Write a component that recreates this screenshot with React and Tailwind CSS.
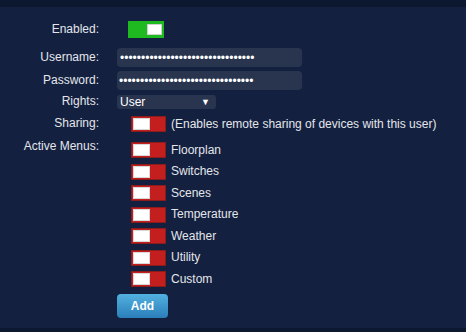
import React from 'react';

const menus = ['Floorplan', 'Switches', 'Scenes', 'Temperature', 'Weather', 'Utility', 'Custom'];

const RedToggle = () => (
  <div className="w-[35px] h-[16px] bg-[#c41f1f] border border-[#8a1c1c] flex items-center pl-[1px] shrink-0">
    <div className="w-[17px] h-[12px] bg-white border border-[#d8d8d8]" />
  </div>
);

const Label = ({ children, className = '' }) => (
  <div className={`w-[99px] text-right shrink-0 ${className}`}>{children}</div>
);

const App = () => {
  return (
    <div className="h-[332px] w-[466px] overflow-hidden flex flex-col bg-[#132040] text-[12px] leading-[14px] text-[#e4e6ea] font-['Liberation_Sans',Arial,sans-serif]">
      {/* barra superior */}
      <div className="h-[7px] bg-[#0b1830] shrink-0" />

      <div className="flex-1 flex flex-col pt-[14px]">
        {/* Enabled */}
        <div className="flex items-center h-[17px]">
          <Label className="-mt-[1px]">Enabled:</Label>
          <div className="ml-[29px] w-[36px] h-[17px] bg-[#1fba1f] flex items-center justify-end pr-[2px]">
            <div className="w-[15px] h-[11px] bg-white border border-[#d0d0d0]" />
          </div>
        </div>

        {/* Username */}
        <div className="flex items-center h-[19px] mt-[10px]">
          <Label className="-mt-[2px]">Username:</Label>
          <div className="ml-[18px] w-[185px] h-[19px] rounded-[4px] bg-[#29354f] flex items-center pl-[3px] text-white">
            ••••••••••••••••••••••••••••••••
          </div>
        </div>

        {/* Password */}
        <div className="flex items-center h-[19px] mt-[4px]">
          <Label className="-mt-[2px]">Password:</Label>
          <div className="ml-[18px] w-[185px] h-[19px] rounded-[4px] bg-[#29354f] flex items-center pl-[2px] text-white">
            ••••••••••••••••••••••••••••••••
          </div>
        </div>

        {/* Rights */}
        <div className="flex items-center h-[14px] mt-[5px]">
          <Label className="-mt-[2px]">Rights:</Label>
          <div className="ml-[18px] w-[99px] h-[14px] rounded-[3px] bg-[#29354f] flex items-center justify-between pl-[3px] pr-[6px] text-white">
            <span>User</span>
            <span className="text-[9px] leading-none">▼</span>
          </div>
        </div>

        {/* Sharing */}
        <div className="flex items-center h-[16px] mt-[7px]">
          <Label className="-mt-[2px]">Sharing:</Label>
          <div className="ml-[32px] flex items-center gap-[5px]">
            <RedToggle />
            <span className="-mt-[1px]">(Enables remote sharing of devices with this user)</span>
          </div>
        </div>

        {/* Active Menus */}
        <div className="flex mt-[10px]">
          <Label className="-mt-[3px]">Active Menus:</Label>
          <div className="ml-[32px] flex flex-col">
            {menus.map((m) => (
              <div key={m} className="h-[21.5px]">
                <div className="h-[16px] flex items-center gap-[5px]">
                  <RedToggle />
                  <span className="-mt-[1px]">{m}</span>
                </div>
              </div>
            ))}
          </div>
        </div>

        {/* Add */}
        <div className="flex mt-[1.5px]">
          <div className="w-[99px] shrink-0" />
          <button className="ml-[18px] w-[51px] h-[24px] rounded-[4px] bg-gradient-to-b from-[#52b1e0] to-[#2b7fb9] text-white text-[12px] font-bold">
            Add
          </button>
        </div>
      </div>

      {/* barra inferior */}
      <div className="h-[4px] bg-[#0b1830] shrink-0" />
    </div>
  );
};

export default App;
